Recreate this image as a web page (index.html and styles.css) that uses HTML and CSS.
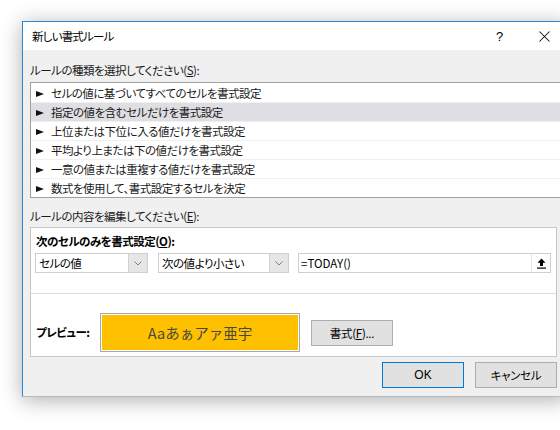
FILE: index.html
```html
<!DOCTYPE html>
<html lang="ja">
<head>
<meta charset="utf-8">
<title>新しい書式ルール</title>
<link rel="stylesheet" href="styles.css">
</head>
<body>
<div class="stage">
  <div class="dialog">
    <div class="titlebar">
      <span class="title">新しい書式ルール</span>
      <span class="tb-btn tb-help">?</span>
      <span class="tb-btn tb-close">
        <svg width="11" height="11" viewBox="0 0 11 11"><path d="M0.5 0.5L10.5 10.5M10.5 0.5L0.5 10.5" stroke="#111" stroke-width="1.05" fill="none"/></svg>
      </span>
    </div>
    <div class="content">
      <div class="label">ルールの種類を選択してください(<u>S</u>):</div>
      <ul class="list">
        <li><span class="ptr"></span>セルの値に基づいてすべてのセルを書式設定</li>
        <li class="sel"><span class="ptr"></span>指定の値を含むセルだけを書式設定</li>
        <li><span class="ptr"></span>上位または下位に入る値だけを書式設定</li>
        <li><span class="ptr"></span>平均より上または下の値だけを書式設定</li>
        <li><span class="ptr"></span>一意の値または重複する値だけを書式設定</li>
        <li><span class="ptr"></span>数式を使用して、書式設定するセルを決定</li>
      </ul>
      <div class="label label2">ルールの内容を編集してください(<u>E</u>):</div>
      <div class="editbox">
        <div class="edit-top">
          <div class="bold">次のセルのみを書式設定(<u>O</u>):</div>
          <div class="controls">
            <div class="dd dd1"><span class="dd-text">セルの値</span><span class="dd-btn"><svg width="8" height="5" viewBox="0 0 8 5"><path d="M0.5 0.5L4 4L7.5 0.5" stroke="#808080" fill="none"/></svg></span></div>
            <div class="dd dd2"><span class="dd-text">次の値より小さい</span><span class="dd-btn"><svg width="8" height="5" viewBox="0 0 8 5"><path d="M0.5 0.5L4 4L7.5 0.5" stroke="#808080" fill="none"/></svg></span></div>
            <div class="field"><span class="field-text">=TODAY()</span><span class="field-btn"><svg width="9" height="11" viewBox="0 0 9 11"><path d="M4.5 0.5L8.5 4.8H6V8H3V4.8H0.5Z" fill="#000"/><rect x="0" y="9.5" width="9" height="1.2" fill="#000"/></svg></span></div>
          </div>
        </div>
        <div class="edit-bottom">
          <span class="bold pv-label">プレビュー:</span>
          <div class="preview">Aaあぁアァ亜宇</div>
          <button class="btn fmt">書式(<u>F</u>)...</button>
        </div>
      </div>
      <div class="actions">
        <button class="btn ok">OK</button>
        <button class="btn">キャンセル</button>
      </div>
    </div>
  </div>
</div>
</body>
</html>
```
FILE: styles.css
```css
html, body {
  margin: 0;
  padding: 0;
  background: #fff;
  width: 560px;
  height: 430px;
  overflow: hidden;
}
body {
  font-family: "Noto Sans CJK JP", "Noto Sans", sans-serif;
  font-size: 11.5px;
  letter-spacing: -0.5px;
  font-feature-settings: "palt";
  color: #000;
}
.stage {
  padding: 21px 0 0 22px;
}
.dialog {
  width: 546px;
  box-sizing: border-box;
  border: 1px solid #2a86d6;
  border-bottom-color: #b9b9b9;
  background: #f0f0f0;
  box-shadow: 0 3px 20px rgba(0, 0, 0, 0.32);
}
.titlebar {
  height: 28px;
  background: #fff;
  display: flex;
  align-items: center;
}
.title {
  flex: 1 1 auto;
  padding-left: 9px;
  line-height: 16px;
  letter-spacing: -0.8px;
}
.tb-btn {
  flex: 0 0 45px;
  width: 45px;
  display: flex;
  align-items: center;
  justify-content: center;
  height: 28px;
}
.tb-help {
  font-family: "Liberation Sans", sans-serif;
  font-size: 13px;
  letter-spacing: 0;
}
.content {
  padding: 12px 10px 8px 7px;
}
.label {
  line-height: 17px;
  height: 17px;
  color: #1a1a1a;
  white-space: nowrap;
}
.list {
  list-style: none;
  margin: 3px -10px 0 0;
  padding: 1px 0 0 0;
  background: #fff;
  border: 1px solid #a0a0a0;
}
.list li {
  height: 17px;
  padding-top: 1px;
  line-height: 17px;
  border-bottom: 1px solid #f0f0f0;
  display: flex;
  align-items: center;
  padding-left: 5px;
  color: #1a1a1a;
  white-space: nowrap;
}
.list li:last-child {
  border-bottom: none;
}
.list li.sel {
  background: #dedee3;
}
.ptr {
  width: 0;
  height: 0;
  border-left: 8px solid #111;
  border-top: 3px solid transparent;
  border-bottom: 3px solid transparent;
  margin-right: 7px;
}
.label2 {
  margin-top: 10px;
}
.editbox {
  margin-top: 2px;
  background: #fff;
  border: 1px solid #c6c6c6;
}
.edit-top {
  padding: 5px 5px 20px 4px;
  border-bottom: 1px solid #dcdcdc;
}
.bold {
  font-weight: bold;
  line-height: 17px;
  padding-left: 1px;
  white-space: nowrap;
}
.controls {
  margin-top: 3px;
  display: flex;
  align-items: center;
  height: 20px;
}
.dd {
  height: 20px;
  box-sizing: border-box;
  border: 1px solid #cfcfcf;
  display: flex;
  align-items: stretch;
  background: #fff;
}
.dd1 {
  width: 113px;
}
.dd2 {
  width: 131px;
  margin-left: 10px;
}
.dd-text {
  flex: 1;
  padding-left: 3px;
  line-height: 18px;
  white-space: nowrap;
}
.dd-btn {
  width: 18px;
  background: #e6e6e6;
  border-left: 1px solid #d2d2d2;
  display: flex;
  align-items: center;
  justify-content: center;
}
.field {
  flex: 1;
  margin-left: 9px;
  height: 20px;
  box-sizing: border-box;
  border: 1px solid #cfcfcf;
  display: flex;
  align-items: stretch;
}
.field-text {
  flex: 1;
  padding-left: 2px;
  line-height: 18px;
  letter-spacing: 0;
}
.field-btn {
  width: 18px;
  border-left: 1px solid #e4e4e4;
  display: flex;
  align-items: center;
  justify-content: center;
}
.edit-bottom {
  display: flex;
  align-items: center;
  padding: 19px 0 4px 4px;
}
.pv-label {
  width: 64px;
  flex: 0 0 64px;
}
.preview {
  width: 200px;
  height: 39px;
  box-sizing: border-box;
  border: 1px solid #a8a8a8;
  box-shadow: inset 0 0 0 1px #fff;
  background: #ffc000;
  display: flex;
  align-items: center;
  justify-content: center;
  font-size: 14.5px;
  color: #4a4a3a;
  font-feature-settings: normal;
  letter-spacing: 0;
}
.btn {
  font-family: inherit;
  font-size: 11.5px;
  letter-spacing: -0.3px;
  font-feature-settings: "palt";
  color: #000;
  background: #e1e1e1;
  border: 1px solid #adadad;
  height: 26px;
  padding: 0;
  margin: 0;
}
.fmt {
  width: 82px;
  margin-left: 11px;
}
.actions {
  margin-top: 5px;
  display: flex;
  justify-content: flex-end;
  gap: 11px;
}
.actions .btn {
  width: 82px;
}
.btn.ok {
  border-color: #0078d7;
  font-family: "Liberation Sans", sans-serif;
  font-size: 12px;
  letter-spacing: 0;
}
```
